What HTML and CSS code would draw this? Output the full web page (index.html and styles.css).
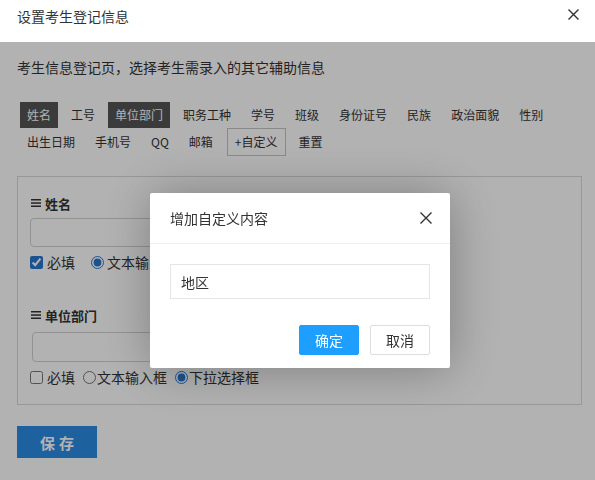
FILE: index.html
```html
<!DOCTYPE html>
<html lang="zh-CN">
<head>
  <meta charset="UTF-8" />
  <meta name="viewport" content="width=device-width, initial-scale=1.0" />
  <title>设置考生登记信息</title>
  <link rel="stylesheet" href="styles.css">
</head>
<body>
  <div class="head">
    <span class="head-title">设置考生登记信息</span>
    <svg class="head-close" width="11" height="11" viewBox="0 0 11 11">
      <path d="M0.5 0.5L10.5 10.5M10.5 0.5L0.5 10.5" stroke="#333" stroke-width="1.4" fill="none" />
    </svg>
  </div>

  <div class="page">
    <p class="tip">考生信息登记页，选择考生需录入的其它辅助信息</p>

    <div class="tags">
      <span class="tag on">姓名</span>
      <span class="tag">工号</span>
      <span class="tag on">单位部门</span>
      <span class="tag">职务工种</span>
      <span class="tag">学号</span>
      <span class="tag">班级</span>
      <span class="tag">身份证号</span>
      <span class="tag">民族</span>
      <span class="tag">政治面貌</span>
      <span class="tag">性别</span>
      <span class="tag">出生日期</span>
      <span class="tag">手机号</span>
      <span class="tag">QQ</span>
      <span class="tag">邮箱</span>
      <span class="tag tag-add">+自定义</span>
      <span class="tag">重置</span>
    </div>

    <div class="fields">
      <div class="field">
        <div class="field-name">
          <svg class="drag" width="10" height="8" viewBox="0 0 10 8">
            <rect x="0" y="0" width="10" height="1.5" fill="#333" />
            <rect x="0" y="3.3" width="10" height="1.5" fill="#333" />
            <rect x="0" y="6.5" width="10" height="1.5" fill="#333" />
          </svg>
          姓名
        </div>
        <input class="field-input" type="text" />
        <div class="opts">
          <input class="chk" type="checkbox" checked /><span>必填</span>
          <input class="rad rad-wide" type="radio" name="t1" checked /><span>文本输入框</span>
          <input class="rad" type="radio" name="t1" /><span>下拉选择框</span>
        </div>
      </div>

      <div class="field">
        <div class="field-name">
          <svg class="drag" width="10" height="8" viewBox="0 0 10 8">
            <rect x="0" y="0" width="10" height="1.5" fill="#333" />
            <rect x="0" y="3.3" width="10" height="1.5" fill="#333" />
            <rect x="0" y="6.5" width="10" height="1.5" fill="#333" />
          </svg>
          单位部门
        </div>
        <select class="field-input field-select"></select>
        <div class="opts">
          <input class="chk" type="checkbox" /><span>必填</span>
          <input class="rad" type="radio" name="t2" /><span>文本输入框</span>
          <input class="rad" type="radio" name="t2" checked /><span>下拉选择框</span>
        </div>
      </div>
    </div>

    <button class="save">保存</button>
  </div>

  <div class="shade"></div>

  <div class="layer">
    <div class="layer-title">
      <span>增加自定义内容</span>
      <svg class="layer-close" width="12" height="12" viewBox="0 0 12 12">
        <path d="M0.5 0.5L11.5 11.5M11.5 0.5L0.5 11.5" stroke="#333" stroke-width="1.4" fill="none" />
      </svg>
    </div>
    <div class="layer-body">
      <input class="layer-input" type="text" value="地区" />
    </div>
    <div class="layer-btns">
      <a class="btn btn-ok">确定</a>
      <a class="btn">取消</a>
    </div>
  </div>
</body>
</html>
```

FILE: styles.css
```css
* {
  box-sizing: border-box;
}
body {
  margin: 0;
  font-family: "Noto Sans CJK SC", "Microsoft YaHei", sans-serif;
  color: #333;
  background: #fff;
  width: 595px;
  height: 480px;
  overflow: hidden;
}

/* window title bar */
.head {
  height: 42px;
  padding: 5px 0 0 17px;
  display: flex;
  align-items: flex-start;
  font-size: 14px;
  line-height: 22px;
  background: #fff;
}
.head-title {
  flex: 1;
}
.head-close {
  margin: 4px 16px 0 0;
}

/* page content */
.page {
  padding: 15px 13px 0 17px;
}
.tip {
  margin: 0;
  font-size: 14px;
  line-height: 20px;
}
.tags {
  margin-top: 25px;
  display: flex;
  flex-wrap: wrap;
  align-items: center;
}
.tag {
  height: 26px;
  line-height: 26px;
  padding: 0 7px;
  margin: 0 3px;
  font-size: 12px;
  color: #333;
}
.tag.on {
  background: #555;
  color: #fff;
}
.tag-add {
  height: 28px;
  border: 1px solid #c4c4c4;
  padding: 0 7px;
  margin-left: 4px;
}

.fields {
  margin-top: 20px;
  border: 1px solid #dadada;
  padding: 16px 12px 16px;
}
.field + .field {
  margin-top: 32px;
}
.field-name {
  display: flex;
  align-items: center;
  height: 20px;
  font-size: 13px;
  font-weight: bold;
}
.drag {
  margin: 0 4px 0 1px;
}
.field-input {
  display: block;
  width: 380px;
  height: 29px;
  margin-top: 5px;
  border: 1px solid #d2d2d2;
  border-radius: 4px;
  background: #fff;
}
.field-select {
  appearance: none;
  height: 30px;
  margin: 7px 0 2px 2px;
}
.opts {
  display: flex;
  align-items: center;
  height: 22px;
  margin-top: 4px;
  font-size: 14px;
}
.opts input {
  width: 13px;
  height: 13px;
  margin: 0;
  accent-color: #2878d0;
}
.chk {
  margin-right: 4px !important;
}
.opts .rad {
  margin-left: 8px;
  margin-right: 1px;
}
.opts .rad-wide {
  margin-left: 16px;
  margin-right: 3px;
}

.save {
  margin-top: 21px;
  width: 80px;
  height: 32px;
  border: none;
  background: #2a8ce4;
  color: #fff;
  font-family: inherit;
  font-size: 15px;
  font-weight: bold;
  letter-spacing: 4px;
  text-indent: 4px;
  padding: 0;
}

/* dimmed backdrop behind the popup */
.shade {
  position: fixed;
  top: 42px;
  left: 0;
  right: 0;
  bottom: 0;
  background: rgba(0, 0, 0, 0.3);
}

/* popup */
.layer {
  position: fixed;
  left: 150px;
  top: 193px;
  width: 300px;
  background: #fff;
  border-radius: 2px;
  box-shadow: 1px 1px 50px rgba(0, 0, 0, 0.3);
}
.layer-title {
  height: 51px;
  padding: 0 18px 0 20px;
  border-bottom: 1px solid #eee;
  display: flex;
  align-items: center;
  justify-content: space-between;
  font-size: 14px;
}
.layer-body {
  padding: 20px 20px 0;
}
.layer-input {
  display: block;
  width: 100%;
  height: 35px;
  border: 1px solid #e6e6e6;
  padding: 0 10px;
  font-family: inherit;
  font-size: 14px;
  color: #333;
  outline: none;
}
.layer-btns {
  display: flex;
  justify-content: flex-end;
  gap: 11px;
  padding: 26px 20px 13px;
}
.btn {
  height: 30px;
  line-height: 28px;
  padding: 0 15px;
  border: 1px solid #dedede;
  border-radius: 2px;
  font-size: 14px;
  color: #333;
  background: #fff;
}
.btn-ok {
  border-color: #1e9fff;
  background: #1e9fff;
  color: #fff;
}
```
